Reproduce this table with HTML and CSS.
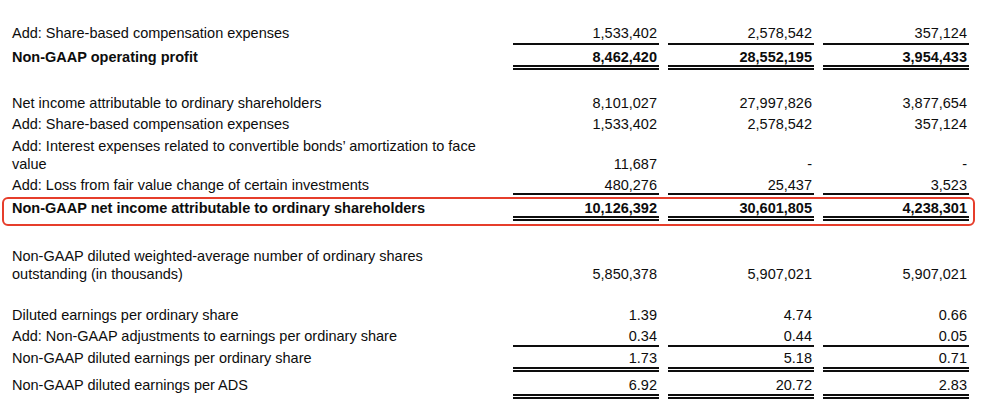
FILE: index.html
```html
<!DOCTYPE html>
<html>
<head>
<meta charset="utf-8">
<link rel="stylesheet" href="styles.css">
</head>
<body>
<div class="sheet">
  <div class="row h21 sgl">
    <div class="lbl">Add: Share-based compensation expenses</div>
    <div class="val">1,533,402</div><div class="val">2,578,542</div><div class="val">357,124</div>
  </div>
  <div class="row h25 dbl bold">
    <div class="lbl">Non-GAAP operating profit</div>
    <div class="val">8,462,420</div><div class="val">28,552,195</div><div class="val">3,954,433</div>
  </div>

  <div class="row h41">
    <div class="lbl">Net income attributable to ordinary shareholders</div>
    <div class="val">8,101,027</div><div class="val">27,997,826</div><div class="val">3,877,654</div>
  </div>
  <div class="row h21">
    <div class="lbl">Add: Share-based compensation expenses</div>
    <div class="val">1,533,402</div><div class="val">2,578,542</div><div class="val">357,124</div>
  </div>
  <div class="row h40">
    <div class="lbl">Add: Interest expenses related to convertible bonds’ amortization to face value</div>
    <div class="val">11,687</div><div class="val">-</div><div class="val">-</div>
  </div>
  <div class="row h23 sgl p0">
    <div class="lbl">Add: Loss from fair value change of certain investments</div>
    <div class="val">480,276</div><div class="val">25,437</div><div class="val">3,523</div>
  </div>
  <div class="row h26 dbl bold hl">
    <div class="lbl">Non-GAAP net income attributable to ordinary shareholders</div>
    <div class="val">10,126,392</div><div class="val">30,601,805</div><div class="val">4,238,301</div>
    <div class="mark"></div>
  </div>

  <div class="row h61">
    <div class="lbl">Non-GAAP diluted weighted-average number of ordinary shares outstanding (in thousands)</div>
    <div class="val">5,850,378</div><div class="val">5,907,021</div><div class="val">5,907,021</div>
  </div>

  <div class="row h41">
    <div class="lbl">Diluted earnings per ordinary share</div>
    <div class="val">1.39</div><div class="val">4.74</div><div class="val">0.66</div>
  </div>
  <div class="row h24 sgl p1">
    <div class="lbl">Add: Non-GAAP adjustments to earnings per ordinary share</div>
    <div class="val">0.34</div><div class="val">0.44</div><div class="val">0.05</div>
  </div>
  <div class="row h25 dbl p1">
    <div class="lbl">Non-GAAP diluted earnings per ordinary share</div>
    <div class="val">1.73</div><div class="val">5.18</div><div class="val">0.71</div>
  </div>
  <div class="row h27 dbl p1">
    <div class="lbl">Non-GAAP diluted earnings per ADS</div>
    <div class="val">6.92</div><div class="val">20.72</div><div class="val">2.83</div>
  </div>
</div>
</body>
</html>
```

FILE: styles.css
```css
html, body {
  margin: 0;
  background: #ffffff;
}
.sheet {
  padding-top: 24px;
  font-family: "Liberation Sans", Arial, sans-serif;
  font-size: 14.5px;
  color: #0d0d0d;
}
.row {
  position: relative;
  display: grid;
  grid-template-columns: 492px 146px 146px 146px;
  column-gap: 9px;
  align-items: end;
  padding-left: 12px;
  box-sizing: border-box;
}
.lbl {
  line-height: 18px;
  margin-bottom: -1px;
  padding-right: 12px;
}
.val {
  line-height: 16px;
  text-align: right;
  padding-right: 2px;
}
.bold { font-weight: bold; }

.h21 { height: 21px; }
.h23 { height: 23px; }
.h24 { height: 24px; }
.h25 { height: 25px; }
.h26 { height: 26px; }
.h27 { height: 27px; }
.h40 { height: 40px; }
.h41 { height: 41px; }
.h61 { height: 61px; }

.sgl .val {
  padding-bottom: 2px;
  border-bottom: 2px solid #0d0d0d;
}
.sgl .lbl { padding-bottom: 4px; }
.dbl .val {
  border-bottom: 5px double #0d0d0d;
}
.dbl .lbl { padding-bottom: 5px; }
.sgl.p0 .val { padding-bottom: 0; }
.sgl.p0 .lbl { padding-bottom: 2px; }
.sgl.p1 .val { padding-bottom: 1px; }
.sgl.p1 .lbl { padding-bottom: 3px; }
.dbl.p1 .val { padding-bottom: 1px; }
.dbl.p1 .lbl { padding-bottom: 6px; }

.mark {
  position: absolute;
  left: 2px;
  top: 2px;
  width: 973px;
  height: 29px;
  box-sizing: border-box;
  border: 2px solid #e63d2b;
  border-radius: 6px;
  pointer-events: none;
}
```
